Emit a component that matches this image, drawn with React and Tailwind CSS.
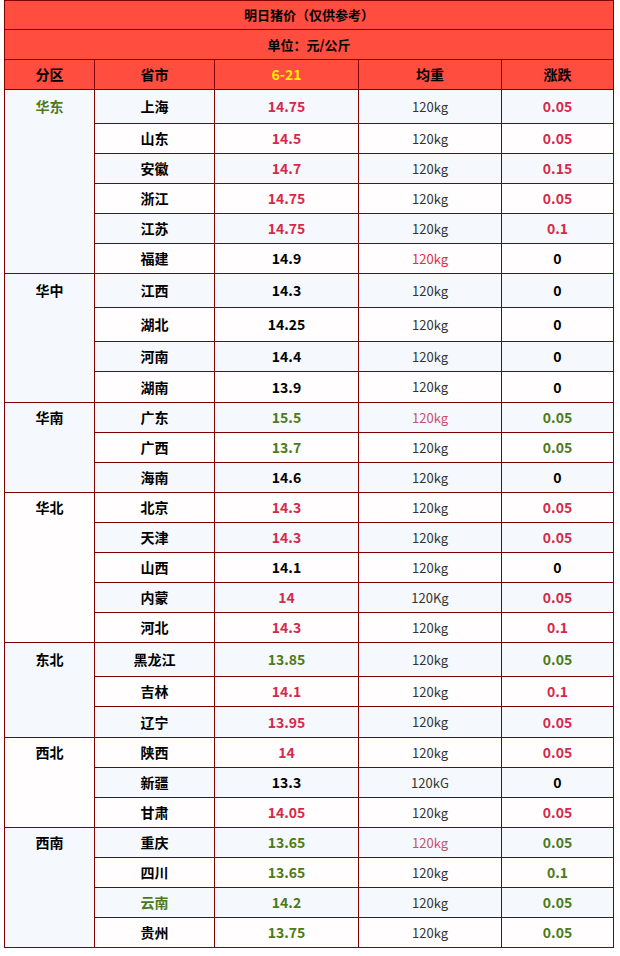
import React from "react";

const R = "text-[#d42a4a]";
const G = "text-[#4d7a1a]";
const K = "text-black";
const KG = "text-[#333333]";
const KR = "text-[#e0303f]";
const KP = "text-[#c8506e]";

const H = {
  30: "h-[30px]",
  31: "h-[31px]",
  34: "h-[34px]",
};
const HI = {
  30: "h-[29px]",
  31: "h-[30px]",
  34: "h-[33px]",
};

const regions = [
  {
    name: "华东",
    nameColor: G,
    rows: [
      ["上海", K, "14.75", R, "120kg", KG, "0.05", R, 34],
      ["山东", K, "14.5", R, "120kg", KG, "0.05", R, 30],
      ["安徽", K, "14.7", R, "120kg", KG, "0.15", R, 30],
      ["浙江", K, "14.75", R, "120kg", KG, "0.05", R, 30],
      ["江苏", K, "14.75", R, "120kg", KG, "0.1", R, 30],
      ["福建", K, "14.9", K, "120kg", KR, "0", K, 30],
    ],
  },
  {
    name: "华中",
    nameColor: K,
    rows: [
      ["江西", K, "14.3", K, "120kg", KG, "0", K, 34],
      ["湖北", K, "14.25", K, "120kg", KG, "0", K, 34],
      ["河南", K, "14.4", K, "120kg", KG, "0", K, 30],
      ["湖南", K, "13.9", K, "120kg", KG, "0", K, 31],
    ],
  },
  {
    name: "华南",
    nameColor: K,
    rows: [
      ["广东", K, "15.5", G, "120kg", KP, "0.05", G, 30],
      ["广西", K, "13.7", G, "120kg", KG, "0.05", G, 30],
      ["海南", K, "14.6", K, "120kg", KG, "0", K, 30],
    ],
  },
  {
    name: "华北",
    nameColor: K,
    rows: [
      ["北京", K, "14.3", R, "120kg", KG, "0.05", R, 30],
      ["天津", K, "14.3", R, "120kg", KG, "0.05", R, 30],
      ["山西", K, "14.1", K, "120kg", KG, "0", K, 30],
      ["内蒙", K, "14", R, "120Kg", KG, "0.05", R, 30],
      ["河北", K, "14.3", R, "120kg", KG, "0.1", R, 30],
    ],
  },
  {
    name: "东北",
    nameColor: K,
    rows: [
      ["黑龙江", K, "13.85", G, "120kg", KG, "0.05", G, 34],
      ["吉林", K, "14.1", R, "120kg", KG, "0.1", R, 30],
      ["辽宁", K, "13.95", R, "120kg", KG, "0.05", R, 31],
    ],
  },
  {
    name: "西北",
    nameColor: K,
    rows: [
      ["陕西", K, "14", R, "120kg", KG, "0.05", R, 30],
      ["新疆", K, "13.3", K, "120kG", KG, "0", K, 30],
      ["甘肃", K, "14.05", R, "120kg", KG, "0.05", R, 30],
    ],
  },
  {
    name: "西南",
    nameColor: K,
    rows: [
      ["重庆", K, "13.65", G, "120kg", KP, "0.05", G, 30],
      ["四川", K, "13.65", G, "120kg", KG, "0.1", G, 30],
      ["云南", G, "14.2", G, "120kg", KG, "0.05", G, 30],
      ["贵州", K, "13.75", G, "120kg", KG, "0.05", G, 30],
    ],
  },
];

const BLUE = "bg-[#f5f9fd]";
const WHITE = "bg-[#fffdfd]";
const cell = "border border-[#800000] p-0 text-center align-middle";

export default function App() {
  let idx = 0;
  const body = [];
  regions.forEach((reg) => {
    reg.rows.forEach((r, i) => {
      const bg = idx % 2 === 0 ? BLUE : WHITE;
      const [prov, provC, price, priceC, kg, kgC, chg, chgC, h] = r;
      body.push(
        <tr key={prov} className={`${H[h]} ${bg}`}>
          {i === 0 && (
            <td
              rowSpan={reg.rows.length}
              className={`border border-[#800000] p-0 text-center align-top ${bg}`}
            >
              <div
                className={`${HI[h]} flex items-center justify-center text-[14px] font-bold ${reg.nameColor}`}
              >
                {reg.name}
              </div>
            </td>
          )}
          <td className={`${cell} text-[14px] font-bold ${provC}`}>{prov}</td>
          <td className={`${cell} text-[14px] font-bold ${priceC}`}>{price}</td>
          <td className={`${cell} text-[13px] ${kgC}`}>{kg}</td>
          <td className={`${cell} text-[14px] font-bold ${chgC}`}>{chg}</td>
        </tr>
      );
      idx++;
    });
  });

  return (
    <div className="min-h-[956px] bg-white font-['Noto_Sans_CJK_SC',sans-serif]">
      <table className="ml-1 w-[609px] table-fixed border-collapse">
        <colgroup>
          <col className="w-[90px]" />
          <col className="w-[120px]" />
          <col className="w-[144px]" />
          <col className="w-[143px]" />
          <col className="w-[112px]" />
        </colgroup>
        <tbody>
          <tr className="h-[29px] bg-[#ff4d40]">
            <td colSpan={5} className={`${cell} text-[13px] font-bold text-black`}>
              明日猪价（仅供参考）
            </td>
          </tr>
          <tr className="h-[30px] bg-[#ff4d40]">
            <td colSpan={5} className={`${cell} text-[13px] font-bold text-black`}>
              单位：元/公斤
            </td>
          </tr>
          <tr className="h-[30px] bg-[#ff4d40]">
            <td className={`${cell} text-[14px] font-bold text-black`}>分区</td>
            <td className={`${cell} text-[14px] font-bold text-black`}>省市</td>
            <td className={`${cell} text-[14px] font-bold text-[#ffee00]`}>6-21</td>
            <td className={`${cell} text-[14px] font-bold text-black`}>均重</td>
            <td className={`${cell} text-[14px] font-bold text-black`}>涨跌</td>
          </tr>
          {body}
        </tbody>
      </table>
    </div>
  );
}
